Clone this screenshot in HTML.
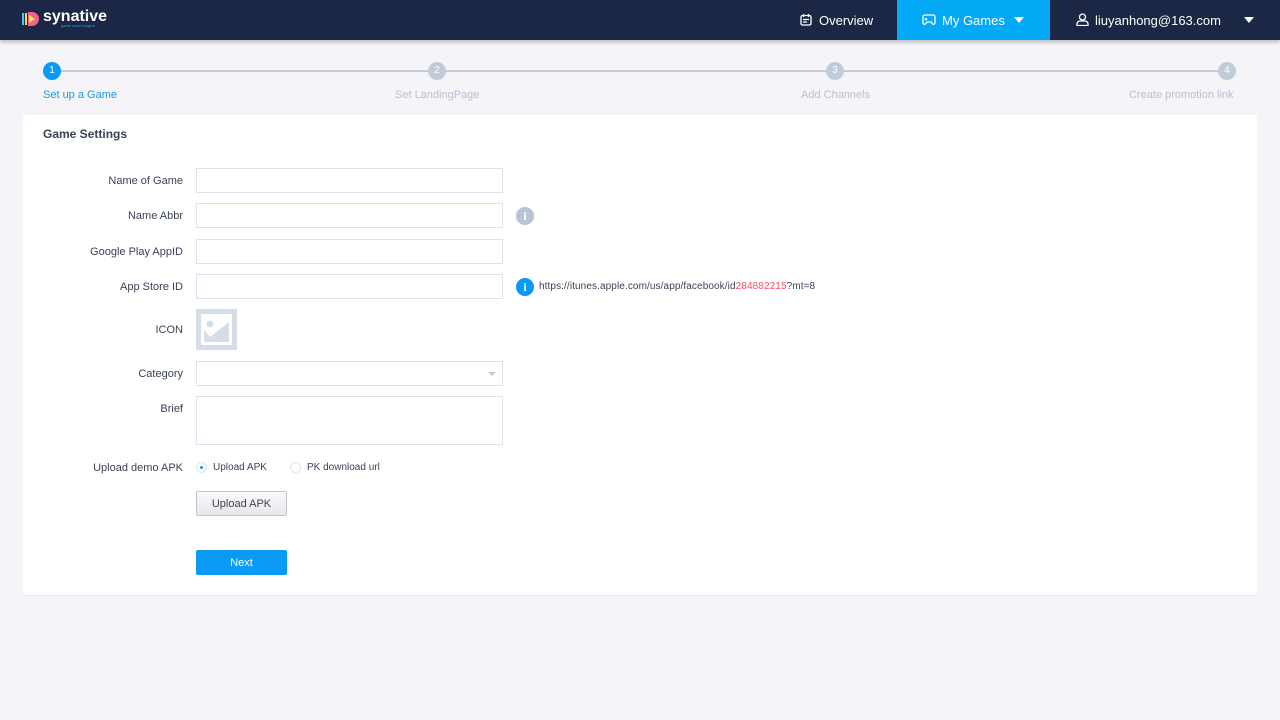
<!DOCTYPE html>
<html><head><meta charset="utf-8"><style>
*{box-sizing:border-box;margin:0;padding:0}
body{width:1280px;height:720px;background:#f4f4f9;font-family:"Liberation Sans",sans-serif;position:relative;overflow:hidden;color:#3a4256}
.hdr{position:absolute;left:0;top:0;width:1280px;height:40px;background:#1b2745;box-shadow:0 2px 4px rgba(0,0,0,.25)}
.hdr .t{position:absolute;top:0;height:40px;line-height:40px;color:#fff;font-size:13px}
.abs{position:absolute}
.step{position:absolute;top:62px;width:18px;height:18px;border-radius:50%;background:#c2ccd9;color:#fff;font-size:10px;text-align:center;line-height:18px}
.sl{position:absolute;top:89px;font-size:11px;color:#b8c2d0}
.lab{position:absolute;right:1097px;font-size:11px;color:#3a4256;text-align:right;white-space:nowrap}
.inp{position:absolute;left:196px;width:307px;height:25px;border:1px solid #dde3ee;background:#fff}
</style></head><body>
<div class="hdr">
 <svg class="abs" style="left:22px;top:11px" width="18" height="16" viewBox="0 0 18 16"><rect x="0" y="2" width="2" height="12" fill="#4fc3f7"/><rect x="3" y="2" width="2" height="12" fill="#ffd54f"/><path d="M6 1h4a7 7 0 0 1 0 14H6z" fill="#f06292"/><path d="M7 4l6 4-6 4z" fill="#ffeb3b"/></svg>
 <div class="t" style="left:43px;top:-3px;font-size:16px;font-weight:bold">synative</div>
 <div class="abs" style="left:61px;top:23px;font-size:4px;color:#29a8e0">game cloud engine</div>
 <svg class="abs" style="left:800px;top:14px" width="12" height="12" viewBox="0 0 12 12" fill="none" stroke="#fff" stroke-width="1.3"><rect x="1" y="1.5" width="10" height="9.5" rx="1.5"/><path d="M3.5 0v3M8.5 0v3M3 5.5h6M3 8h4"/></svg>
 <div class="t" style="left:819px;top:1px">Overview</div>
 <div class="abs" style="left:897px;top:0;width:153px;height:40px;background:#03a9f4"></div>
 <svg class="abs" style="left:922px;top:13px" width="14" height="13" viewBox="0 0 14 13" fill="none" stroke="#fff" stroke-width="1.3"><path d="M3 2h8a2 2 0 0 1 2 2l0 6a1.5 1.5 0 0 1-2.5 1L9 9H5l-1.5 2A1.5 1.5 0 0 1 1 10V4a2 2 0 0 1 2-2zM4 5v2.5M2.8 6.2h2.4M9.5 5.5h.1M10.5 7h.1"/></svg>
 <div class="t" style="left:942px;top:1px">My Games</div>
 <div class="abs" style="left:1014px;top:17px;border:5px solid transparent;border-top:6px solid #fff;border-bottom:0"></div>
 <svg class="abs" style="left:1076px;top:13px" width="13" height="13" viewBox="0 0 13 13" fill="none" stroke="#fff" stroke-width="1.3"><circle cx="6.5" cy="4" r="3"/><path d="M1 12.5v-1.5a3 3 0 0 1 3-3h5a3 3 0 0 1 3 3v1.5z"/></svg>
 <div class="t" style="left:1095px;top:1px">liuyanhong@163.com</div>
 <div class="abs" style="left:1244px;top:17px;border:5px solid transparent;border-top:6px solid #fff;border-bottom:0"></div>
</div>
<div class="abs" style="left:52px;top:70px;width:1175px;height:2px;background:#c2ccd9"></div>
<div class="step" style="left:43px;background:#0a9af5">1</div>
<div class="step" style="left:428px">2</div>
<div class="step" style="left:826px">3</div>
<div class="step" style="left:1218px">4</div>
<div class="sl" style="left:43px;color:#1a9af0">Set up a Game</div>
<div class="sl" style="left:395px">Set LandingPage</div>
<div class="sl" style="left:801px">Add Channels</div>
<div class="sl" style="left:1129px">Create promotion link</div>
<div class="abs" style="left:23px;top:115px;width:1234px;height:481px;background:#fff;border-bottom:1px solid #e4e7ef"></div>
<div class="abs" style="left:43px;top:127px;font-size:12px;font-weight:bold;color:#3a4256">Game Settings</div>
<div class="lab" style="top:175px">Name of Game</div><div class="inp" style="top:168px"></div>
<div class="lab" style="top:210px">Name Abbr</div><div class="inp" style="top:203px"></div>
<div class="abs" style="left:516px;top:207px;width:18px;height:18px;border-radius:50%;background:#b8c4d4;color:#fff;font:bold 12px 'Liberation Serif',serif;text-align:center;line-height:18px">i</div>
<div class="lab" style="top:246px">Google Play AppID</div><div class="inp" style="top:239px"></div>
<div class="lab" style="top:281px">App Store ID</div><div class="inp" style="top:274px"></div>
<div class="abs" style="left:516px;top:278px;width:18px;height:18px;border-radius:50%;background:#0a9af5;color:#fff;font:bold 12px 'Liberation Serif',serif;text-align:center;line-height:18px">i</div>
<div class="abs" style="left:539px;top:281px;font-size:10px;letter-spacing:0.1px;color:#3a4256">https://itunes.apple.com/us/app/facebook/id<span style="color:#f0506e">284882215</span>?mt=8</div>
<div class="lab" style="top:324px">ICON</div>
<div class="abs" style="left:196px;top:309px;width:41px;height:41px;background:#d5dde8;padding:5px"><svg width="31" height="31" viewBox="0 0 31 31"><rect width="31" height="31" fill="#fff"/><path d="M3 28V16l6 7L28 8v20z" fill="#d5dde8"/><circle cx="9" cy="10" r="3.5" fill="#d5dde8"/></svg></div>
<div class="lab" style="top:368px">Category</div><div class="inp" style="top:361px"></div>
<div class="abs" style="left:488px;top:372px;border:4px solid transparent;border-top:4px solid #c2ccd9;border-bottom:0"></div>
<div class="lab" style="top:403px">Brief</div><div class="inp" style="top:396px;height:49px"></div>
<div class="lab" style="top:462px">Upload demo APK</div>
<div class="abs" style="left:196px;top:462px;width:11px;height:11px;border-radius:50%;border:1px solid #dde3ee"><div style="width:3px;height:3px;background:#0a9af5;border-radius:50%;margin:3px"></div></div>
<div class="abs" style="left:213px;top:462px;font-size:10px">Upload APK</div>
<div class="abs" style="left:290px;top:462px;width:11px;height:11px;border-radius:50%;border:1px solid #dde3ee"></div>
<div class="abs" style="left:307px;top:462px;font-size:10px">PK download url</div>
<div class="abs" style="left:196px;top:491px;width:91px;height:25px;border:1px solid #bfc6d0;border-radius:2px;background:linear-gradient(#fafafa,#e8e8ec);font-size:11px;text-align:center;line-height:24px">Upload APK</div>
<div class="abs" style="left:196px;top:550px;width:91px;height:25px;border-radius:2px;background:#0a9af5;color:#fff;font-size:11px;text-align:center;line-height:26px">Next</div>
</body></html>
